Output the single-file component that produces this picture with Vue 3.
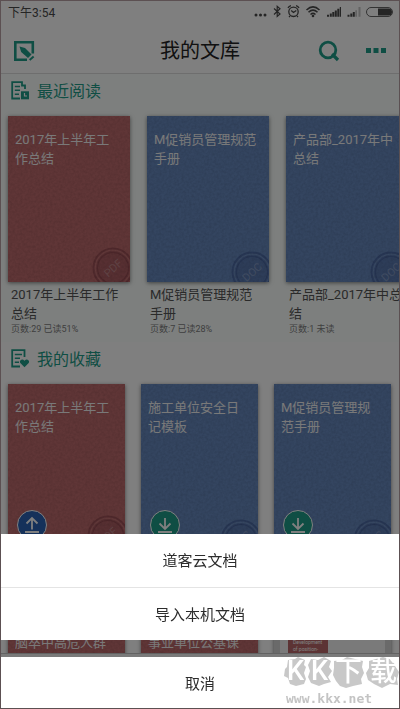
<template>
  <div class="screen">
    <div class="status-bar">
      <span>下午3:54</span>
      <svg class="status-icons" width="140" height="16" viewBox="0 0 140 16">
        <g fill="#4a4a4a">
          <circle cx="2" cy="12" r="1.5" />
          <circle cx="6.500" cy="12" r="1.5" />
          <circle cx="11" cy="12" r="1.5" />
        </g>
        <path d="M20 5.500 L26 11 L23.200 13.500 V3.300 L26 5.800 L20 11.500" fill="none" stroke="#4a4a4a" stroke-width="1.2" />
        <g fill="none" stroke="#4a4a4a" stroke-width="1.3">
          <circle cx="39.500" cy="8.800" r="4.700" />
          <path d="M37.200 7.500 L39.500 9.500 L42.300 7.500 M34 5 A4 4 0 0 1 37 2.600 M45 5 A4 4 0 0 0 42 2.600 M36 13 L35 14 M43 13 L44 14" />
          <path d="M52.500 7 Q59 .8 65.500 7 M54.500 9.300 Q59 5 63.500 9.300 M56.500 11.500 Q59 9.300 61.500 11.500" stroke-width="1.500" />
        </g>
        <circle cx="59" cy="13" r="1.300" fill="#4a4a4a" />
        <path d="M73 13.800v-2h2v2z M75.800 13.800v-3.200h2v3.200z M78.300 13.800v-4.800h2v4.800z M80.800 13.800v-6.200h2v6.200z M83.300 13.800v-8h2v8z M85.800 13.800v-9.800h1.200v9.800z" fill="#4a4a4a" />
        <path d="M93.500 13.800v-2h2v2z M96.300 13.800v-3.200h2v3.200z M98.800 13.800v-4.800h2v4.800z" fill="#4a4a4a" />
        <path d="M101.300 13.800v-6.500h1.700v6.500z M104.500 13.800v-9.800h2v9.800z" fill="#c4c4c4" />
        <rect x="112.500" y="4.500" width="26" height="9" rx="4.500" fill="none" stroke="#666" />
        <path d="M124 5.500 H134.500 A3.500 3.500 0 0 1 134.500 12.500 H124 Z" fill="#4a4a4a" />
      </svg>
    </div>

    <header class="top-bar">
      <button class="icon-btn" aria-label="编辑">
        <svg width="22" height="22" viewBox="0 0 22 22">
          <path d="M19.800 13.500 V2.300 H2.300 V19.800 H14" fill="none" stroke="#1f9c88" stroke-width="2.600" />
          <path d="M6.500 6.500 L12 8 L18.500 14.500 L15 18 L8.200 12 Z" fill="#1f9c88" />
          <path d="M16 19.300 L20 15.800 L21.300 17.300 L17.300 20.800 Z" fill="#1f9c88" />
        </svg>
      </button>
      <h1 class="top-title">我的文库</h1>
      <div class="top-actions">
        <button class="icon-btn" aria-label="搜索">
          <svg width="22" height="22" viewBox="0 0 22 22">
            <circle cx="10" cy="10" r="7.800" fill="none" stroke="#1f9c88" stroke-width="2.800" />
            <path d="M14 14 L20 20" stroke="#1f9c88" stroke-width="3.200" />
          </svg>
        </button>
        <button class="icon-btn" aria-label="更多">
          <svg width="22" height="22" viewBox="0 0 22 22" fill="#1f9c88">
            <rect x="1" y="8" width="5" height="5" />
            <rect x="8.500" y="8" width="5" height="5" />
            <rect x="16" y="8" width="5" height="5" />
          </svg>
        </button>
      </div>
    </header>

    <main class="content">
      <section class="section recent">
        <h2 class="section-title">
          <svg width="19" height="19" viewBox="0 0 19 19">
            <path d="M14 8 V4.500 H11 V1.200 H1.200 V17.500 H9" fill="none" stroke="#1f9c88" stroke-width="1.800" />
            <path d="M3.800 5.500 H9 M3.800 9.300 H9 M3.800 13.200 H8" stroke="#1f9c88" stroke-width="1.600" />
            <rect x="10" y="10.300" width="8" height="8" fill="#1f9c88" />
            <path d="M13.500 12 V15 H16" fill="none" stroke="#fff" stroke-width="1.200" />
          </svg>
          最近阅读
        </h2>
        <div class="recent-list">
          <article v-for="doc in recentDocs" :key="doc.title" class="recent-item">
            <div class="cover" :class="doc.type">
              <svg class="grain" width="100%" height="100%">
                <rect width="100%" height="100%" filter="url(#grain)" />
              </svg>
              <span class="cover-title">{{ doc.title }}</span>
              <svg class="seal" width="44" height="44" viewBox="0 0 44 44">
                <circle cx="22" cy="22" r="19.500" class="seal-ring" />
                <circle cx="22" cy="22" r="16" class="seal-face" />
                <text x="22" y="26" class="seal-text" transform="rotate(-42 22 22)">{{ doc.type.toUpperCase() }}</text>
              </svg>
            </div>
            <div class="doc-name">{{ doc.title }}</div>
            <div class="doc-meta">{{ doc.meta }}</div>
          </article>
        </div>
      </section>

      <section class="section">
        <h2 class="section-title">
          <svg width="19" height="19" viewBox="0 0 19 19">
            <path d="M13.500 8 V1.200 H1.200 V17.500 H9" fill="none" stroke="#1f9c88" stroke-width="1.800" />
            <path d="M3.800 5.500 H11 M3.800 9.300 H9 M3.800 13.200 H8" stroke="#1f9c88" stroke-width="1.600" />
            <path d="M13.500 18.300 L9.300 14 C7.700 12 11 8.900 13.500 11.800 C16 8.900 19.300 12 17.700 14 Z" fill="#1f9c88" />
          </svg>
          我的收藏
        </h2>
        <div class="fav-grid">
          <div v-for="doc in favDocs" :key="doc.title" class="cover" :class="doc.type">
            <template v-if="doc.type !== 'page'">
              <svg class="grain" width="100%" height="100%">
                <rect width="100%" height="100%" filter="url(#grain)" />
              </svg>
              <span class="cover-title">{{ doc.title }}</span>
              <svg v-if="doc.sync" class="seal" width="44" height="44" viewBox="0 0 44 44">
                <circle cx="22" cy="22" r="19.500" class="seal-ring" />
                <circle cx="22" cy="22" r="16" class="seal-face" />
                <text x="22" y="26" class="seal-text" transform="rotate(-42 22 22)">{{ doc.type.toUpperCase() }}</text>
              </svg>
              <span v-if="doc.sync" class="sync" :class="doc.sync">
                <svg width="28" height="28" viewBox="0 0 28 28" fill="none" stroke="#fff" stroke-width="1.800">
                  <path v-if="doc.sync === 'up'" d="M14 18.500 V7 M8.500 12.500 L14 7 L19.500 12.500 M7 21 H21" />
                  <path v-else d="M14 7 V18 M8.500 12.500 L14 18 L19.500 12.500 M7 21 H21" />
                </svg>
              </span>
            </template>
            <div v-else class="page-label">{{ doc.title }}</div>
          </div>
        </div>
      </section>
    </main>

    <footer class="tab-bar"></footer>

    <svg class="defs" width="0" height="0">
      <filter id="grain" x="0" y="0" width="100%" height="100%">
        <feTurbulence type="fractalNoise" baseFrequency="0.4" numOctaves="2" />
        <feColorMatrix type="matrix" values="0 0 0 0 0  0 0 0 0 0  0 0 0 0 0  0.300 0 0 0 -0.100" />
      </filter>
    </svg>

    <div class="mask"></div>
    <div class="action-sheet">
      <div class="sheet-group">
        <button v-for="action in actions" :key="action" class="sheet-btn">{{ action }}</button>
      </div>
      <button class="sheet-btn cancel">取消</button>
    </div>

    <div class="watermark">
      <svg class="mark-logo" width="116" height="32" viewBox="0 0 116 32">
        <g fill="#c8c8c8">
          <path d="M4 3 L11 2 L14 0 L21 3 L20 8 L22 10 L20 16 L22 22 L20 27 L12 29 L6 27 L4 21 L0 19 L1 12 L3 10 Z" />
          <path d="M27 2 L34 3 L40 0 L47 4 L45 10 L48 14 L44 20 L47 25 L40 27 L35 29 L27 26 L24 20 L26 14 L24 8 Z" />
          <path d="M50 4 L58 3 L63 0 L71 2 L79 4 L78 10 L80 16 L77 22 L78 27 L69 29 L62 31 L56 29 L52 24 L49 18 L50 11 Z" />
          <path d="M85 4 L92 2 L99 0 L109 3 L111 9 L115 15 L113 22 L114 28 L106 27 L98 31 L90 27 L84 23 L82 16 L85 11 Z" />
        </g>
        <text x="3" y="23" class="mark-text">K</text>
        <text x="27" y="23" class="mark-text">K</text>
        <text x="51" y="24" class="mark-text">下</text>
        <text x="86" y="24" class="mark-text">载</text>
      </svg>
      <div class="mark-url">www.kkx.net</div>
    </div>
  </div>
</template>

<script setup>
import { ref } from 'vue'

const recentDocs = ref([
  { title: '2017年上半年工作总结', type: 'pdf', meta: '页数:29 已读51%' },
  { title: 'M促销员管理规范手册', type: 'doc', meta: '页数:7 已读28%' },
  { title: '产品部_2017年中总结', type: 'doc', meta: '页数:1 未读' }
])

const favDocs = ref([
  { title: '2017年上半年工作总结', type: 'pdf', sync: 'up' },
  { title: '施工单位安全日记模板', type: 'doc', sync: 'down' },
  { title: 'M促销员管理规范手册', type: 'doc', sync: 'down' },
  { title: '脑卒中高危人群', type: 'pdf' },
  { title: '事业单位公基课', type: 'pdf' },
  { title: 'Development of position-', type: 'page' }
])

const actions = ref(['道客云文档', '导入本机文档'])
</script>

<style>
body {
  margin: 0;
}
</style>

<style scoped>
.screen {
  position: relative;
  box-sizing: border-box;
  height: 100vh;
  display: flex;
  flex-direction: column;
  overflow: hidden;
  background: #fff;
  border: 1px solid #b8a0a4;
  font-family: Roboto, "Noto Sans CJK SC", sans-serif;
}

button {
  margin: 0;
  padding: 0;
  border: 0;
  background: none;
  font: inherit;
}

.status-bar {
  flex: none;
  display: flex;
  align-items: center;
  justify-content: space-between;
  box-sizing: border-box;
  height: 22px;
  padding: 0 5px 2px 7px;
  font-size: 12px;
  color: #4a4a4a;
}

.top-bar {
  flex: none;
  display: grid;
  grid-template-columns: 1fr auto 1fr;
  align-items: center;
  box-sizing: border-box;
  height: 51px;
  padding: 5px 12px 0;
  border-bottom: 1px solid #dcdcdc;
}

.icon-btn,
.icon-btn svg {
  display: block;
}

.icon-btn {
  justify-self: start;
}

.top-title {
  margin: 0;
  font-size: 20px;
  font-weight: 400;
  line-height: 28px;
  color: #222;
}

.top-actions {
  display: flex;
  justify-content: flex-end;
  gap: 25px;
}

.content {
  flex: 1;
  min-height: 0;
  overflow: hidden;
}

.section-title {
  display: flex;
  align-items: center;
  gap: 7px;
  height: 32px;
  margin: 0;
  padding-left: 10px;
  font-size: 16px;
  font-weight: 400;
  color: #1f9c88;
}

.recent {
  padding-bottom: 6px;
  background: #fafefc;
}

.recent-list {
  display: flex;
  gap: 17px;
  padding: 10px 0 0 7px;
}

.recent-item {
  flex: none;
  width: 122px;
}

.fav-grid {
  display: grid;
  grid-template-columns: repeat(3, 1fr);
  gap: 69px 16px;
  padding: 10px 8px 0 7px;
}

.cover {
  position: relative;
  box-sizing: border-box;
  height: 166px;
  padding: 14px 9px 14px 7px;
  overflow: hidden;
  box-shadow: 0 1px 4px rgba(0, 0, 0, 0.5);
}

.cover.pdf {
  background: #c06c6e;
}

.cover.doc {
  background: #688ac0;
}

.grain {
  position: absolute;
  inset: 0;
  opacity: 0.6;
}

.defs {
  position: absolute;
}

.cover-title {
  position: relative;
  display: block;
  font-size: 13px;
  line-height: 19px;
  word-break: break-all;
  color: #f2f2f2;
}

.seal {
  position: absolute;
  right: -5px;
  bottom: -8px;
}

.doc .seal {
  bottom: -12px;
}

.seal-ring {
  fill: rgba(255, 255, 255, 0.03);
  stroke: rgba(60, 0, 20, 0.25);
  stroke-width: 2px;
}

.seal-face {
  fill: rgba(60, 0, 20, 0.15);
  stroke: rgba(60, 0, 20, 0.2);
  stroke-width: 2px;
}

.doc .seal-ring {
  stroke: rgba(0, 20, 90, 0.25);
}

.doc .seal-face {
  fill: rgba(0, 20, 90, 0.15);
  stroke: rgba(0, 20, 90, 0.2);
}

.seal-text {
  font-size: 11px;
  text-anchor: middle;
  fill: rgba(255, 255, 255, 0.25);
}

.doc-name {
  margin-top: 3px;
  padding: 0 5px 0 3px;
  font-size: 13px;
  line-height: 19px;
  word-break: break-all;
  color: #555;
}

.doc-meta {
  padding: 0 3px;
  font-size: 9px;
  line-height: 13px;
  color: #808080;
}

.sync {
  position: absolute;
  left: 9px;
  bottom: 10px;
  width: 28px;
  height: 28px;
  border: 1px solid #fff;
  border-radius: 50%;
}

.sync svg {
  display: block;
}

.sync.up {
  background: #2a62b4;
}

.sync.down {
  background: #1f9c88;
}

.cover.page {
  padding: 14px 8px;
  background: #f4f4f4;
  border: solid #d4d4d4;
  border-width: 0 6px;
}

.page-label {
  box-sizing: border-box;
  width: 40px;
  height: 60px;
  padding: 6px 5px;
  background: #b86769;
  font-size: 5px;
  line-height: 7px;
  color: #fff;
}

.tab-bar {
  flex: none;
  height: 54px;
  border-top: 1px solid #c4c4c4;
  background: #f4f4f4;
}

.mask {
  position: fixed;
  inset: 0;
  background: rgba(0, 0, 0, 0.5);
}

.action-sheet {
  position: fixed;
  left: 1px;
  right: 1px;
  bottom: 1px;
  display: flex;
  flex-direction: column;
  gap: 17px;
}

.sheet-group {
  display: flex;
  flex-direction: column;
  background: #fff;
}

.sheet-btn {
  box-sizing: border-box;
  height: 53px;
  padding-bottom: 2px;
  font-size: 15px;
  color: #2c2c2c;
  background: #fff;
}

.sheet-btn + .sheet-btn {
  border-top: 1px solid #e4e4e4;
}

.cancel {
  height: 51px;
  padding-bottom: 0;
}

.watermark {
  position: fixed;
  right: 0;
  bottom: 0;
  width: 116px;
  pointer-events: none;
}

.mark-logo {
  display: block;
}

.mark-text {
  font-family: Roboto, "Noto Sans CJK SC", sans-serif;
  font-size: 27px;
  font-weight: 500;
  fill: #fff;
}

.mark-url {
  padding-left: 2px;
  font-family: "DejaVu Sans Mono", monospace;
  font-size: 13px;
  font-weight: 700;
  line-height: 20px;
  color: #c4c4c4;
}
</style>
